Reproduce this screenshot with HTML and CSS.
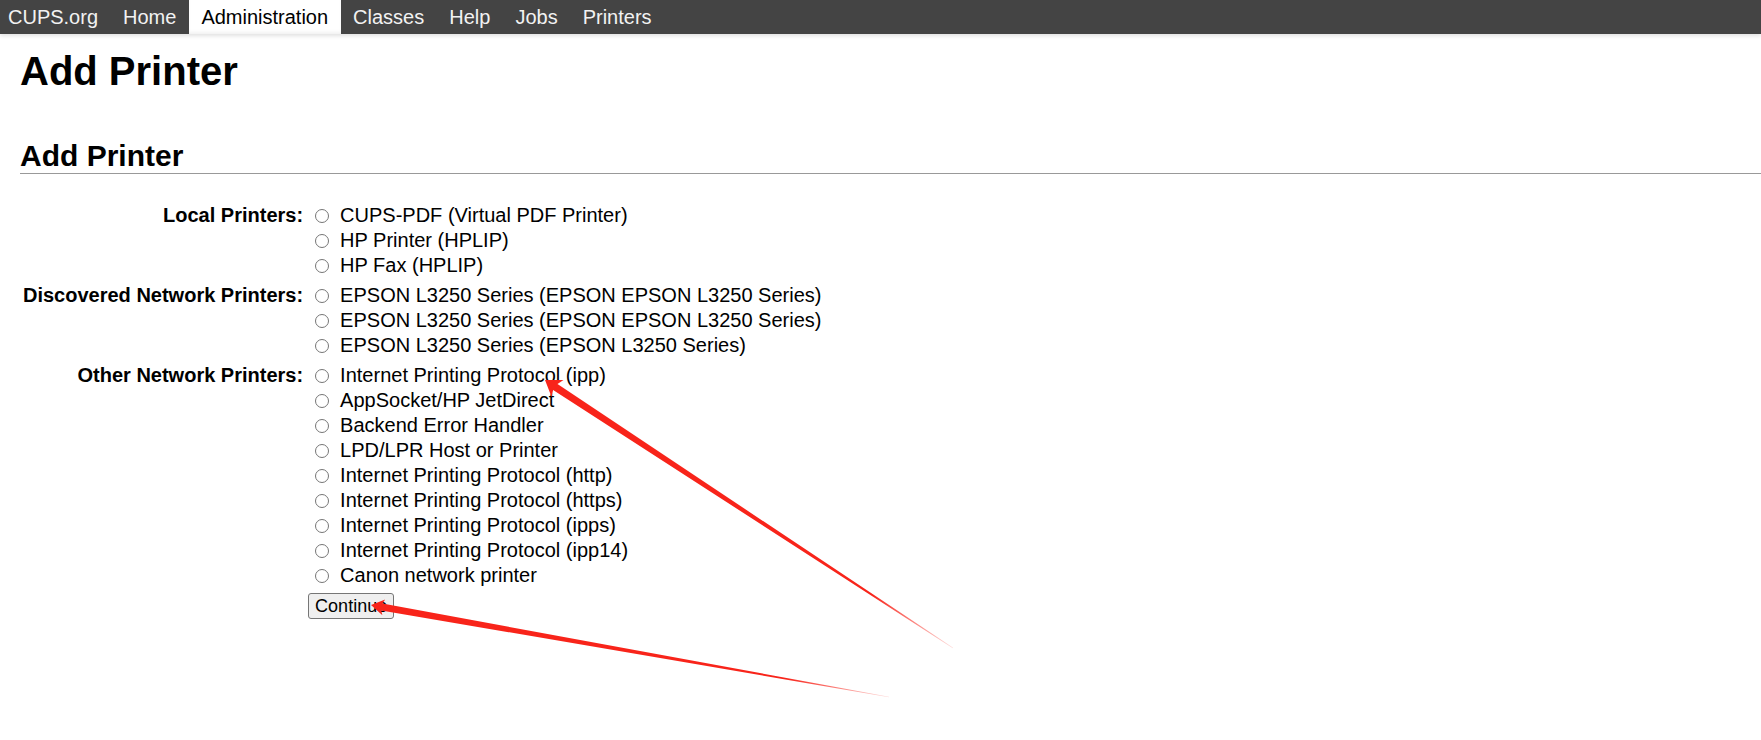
FILE: index.html
```html
<!DOCTYPE html>
<html lang="en">
<head>
<meta charset="utf-8">
<title>Add Printer - CUPS</title>
<link rel="stylesheet" href="styles.css">
</head>
<body>
<header class="header">
  <nav class="nav">
    <a class="nav-link nav-first" href="#">CUPS.org</a>
    <a class="nav-link" href="#">Home</a>
    <a class="nav-link active" href="#">Administration</a>
    <a class="nav-link" href="#">Classes</a>
    <a class="nav-link" href="#">Help</a>
    <a class="nav-link" href="#">Jobs</a>
    <a class="nav-link" href="#">Printers</a>
  </nav>
</header>
<main class="body">
  <h1 class="title">Add Printer</h1>
  <h2 class="title2">Add Printer</h2>
  <form>
    <table class="form-table">
      <tr>
        <th class="label">Local Printers:</th>
        <td>
          <label class="opt"><input class="radio" type="radio" name="device">CUPS-PDF (Virtual PDF Printer)</label><br>
          <label class="opt"><input class="radio" type="radio" name="device">HP Printer (HPLIP)</label><br>
          <label class="opt"><input class="radio" type="radio" name="device">HP Fax (HPLIP)</label>
        </td>
      </tr>
      <tr>
        <th class="label">Discovered Network Printers:</th>
        <td>
          <label class="opt"><input class="radio" type="radio" name="device">EPSON L3250 Series (EPSON EPSON L3250 Series)</label><br>
          <label class="opt"><input class="radio" type="radio" name="device">EPSON L3250 Series (EPSON EPSON L3250 Series)</label><br>
          <label class="opt"><input class="radio" type="radio" name="device">EPSON L3250 Series (EPSON L3250 Series)</label>
        </td>
      </tr>
      <tr>
        <th class="label">Other Network Printers:</th>
        <td>
          <label class="opt"><input class="radio" type="radio" name="device">Internet Printing Protocol (ipp)</label><br>
          <label class="opt"><input class="radio" type="radio" name="device">AppSocket/HP JetDirect</label><br>
          <label class="opt"><input class="radio" type="radio" name="device">Backend Error Handler</label><br>
          <label class="opt"><input class="radio" type="radio" name="device">LPD/LPR Host or Printer</label><br>
          <label class="opt"><input class="radio" type="radio" name="device">Internet Printing Protocol (http)</label><br>
          <label class="opt"><input class="radio" type="radio" name="device">Internet Printing Protocol (https)</label><br>
          <label class="opt"><input class="radio" type="radio" name="device">Internet Printing Protocol (ipps)</label><br>
          <label class="opt"><input class="radio" type="radio" name="device">Internet Printing Protocol (ipp14)</label><br>
          <label class="opt"><input class="radio" type="radio" name="device">Canon network printer</label>
        </td>
      </tr>
      <tr>
        <td></td>
        <td><button class="btn" type="button">Continue</button></td>
      </tr>
    </table>
  </form>
</main>
<svg class="annot" width="1761" height="740" viewBox="0 0 1761 740" aria-hidden="true">
  <defs>
    <linearGradient id="g1" gradientUnits="userSpaceOnUse" x1="545" y1="380" x2="953" y2="648">
      <stop offset="0" stop-color="#f8241a" stop-opacity="1"/>
      <stop offset="0.8" stop-color="#f8241a" stop-opacity="1"/>
      <stop offset="1" stop-color="#f8241a" stop-opacity="0.15"/>
    </linearGradient>
    <linearGradient id="g2" gradientUnits="userSpaceOnUse" x1="371" y1="605" x2="889" y2="697">
      <stop offset="0" stop-color="#f8241a" stop-opacity="1"/>
      <stop offset="0.8" stop-color="#f8241a" stop-opacity="1"/>
      <stop offset="1" stop-color="#f8241a" stop-opacity="0.15"/>
    </linearGradient>
  </defs>
  <polygon fill="url(#g1)" points="545,380 563.5,380 557.5,384 953.2,647.8 952.8,648.2 553.1,390 551.6,397"/>
  <polygon fill="url(#g2)" points="371,605 385.2,599.4 382.4,603.5 889,696.8 889,697.2 381.2,610.4 382.4,615.2"/>
</svg>
</body>
</html>
```
FILE: styles.css
```css
html, body {
  margin: 0;
  padding: 0;
}

body {
  position: relative;
  min-height: 740px;
  background: #fff;
  color: #000;
  font-family: "Liberation Sans", Arial, sans-serif;
  font-size: 20px;
  overflow: hidden;
}

.header {
  background: #444;
  height: 34px;
  box-shadow: 0 2px 4px rgba(0, 0, 0, 0.12);
}

.nav {
  display: flex;
  height: 34px;
}

.nav-link {
  display: block;
  padding: 0 12.5px;
  line-height: 34px;
  color: #f2f2f2;
  text-decoration: none;
}

.nav-first {
  padding-left: 8px;
}

.nav-link.active {
  background: #fff;
  color: #000;
  box-shadow: inset 0 -3px 4px -2px rgba(0, 0, 0, 0.08);
}

.body {
  padding: 0 0 0 20px;
}

.title {
  margin: 14px 0 0;
  font-size: 40px;
  line-height: 46px;
  font-weight: bold;
}

.title2 {
  margin: 44px 0 0;
  font-size: 30px;
  line-height: 35px;
  font-weight: bold;
  border-bottom: 1px solid #999;
}

form {
  margin: 25px 0 0;
}

.form-table {
  border-spacing: 2px;
}

.form-table th,
.form-table td {
  padding: 1.5px 1px;
  line-height: 25px;
  vertical-align: top;
}

.label {
  text-align: right;
  font-weight: bold;
  white-space: nowrap;
}

.opt {
  white-space: nowrap;
}

.radio {
  -webkit-appearance: none;
  appearance: none;
  width: 14px;
  height: 14px;
  margin: 0 11px 0 8px;
  border: 1px solid #767676;
  border-radius: 50%;
  background: #fff;
  vertical-align: -1px;
  box-sizing: border-box;
}

.btn {
  margin: 0 0 0 1px;
  font-family: "Liberation Sans", Arial, sans-serif;
  font-size: 18px;
  line-height: 22px;
  padding: 1px 6px;
  border: 1px solid #767676;
  border-radius: 3px;
  background: #efefef;
  color: #000;
}

.annot {
  position: absolute;
  top: 0;
  left: 0;
  pointer-events: none;
}
```
